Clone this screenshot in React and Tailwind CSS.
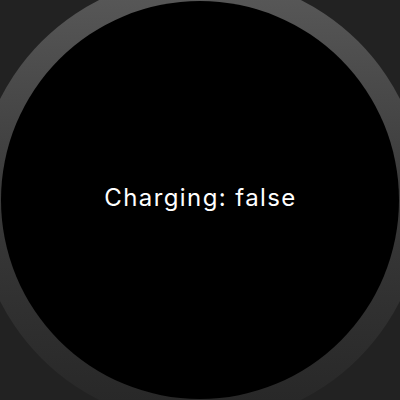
export default function App() {
  return (
    <div className="w-[400px] h-[400px] bg-[#222222] overflow-hidden relative flex items-center justify-center">
      <div className="w-[448px] h-[448px] shrink-0 rounded-full bg-gradient-to-b from-[#5a5a5a] via-[#3a3a3a] to-[#262626] flex items-center justify-center">
        <div className="w-[398px] h-[398px] rounded-full bg-black flex items-center justify-center">
          <p
            className="text-white text-[24px] leading-none tracking-[1.4px] pl-[1px] -mt-[4px]"
            style={{ fontFamily: "Inter, Roboto, sans-serif" }}
          >
            Charging: false
          </p>
        </div>
      </div>
    </div>
  );
}
